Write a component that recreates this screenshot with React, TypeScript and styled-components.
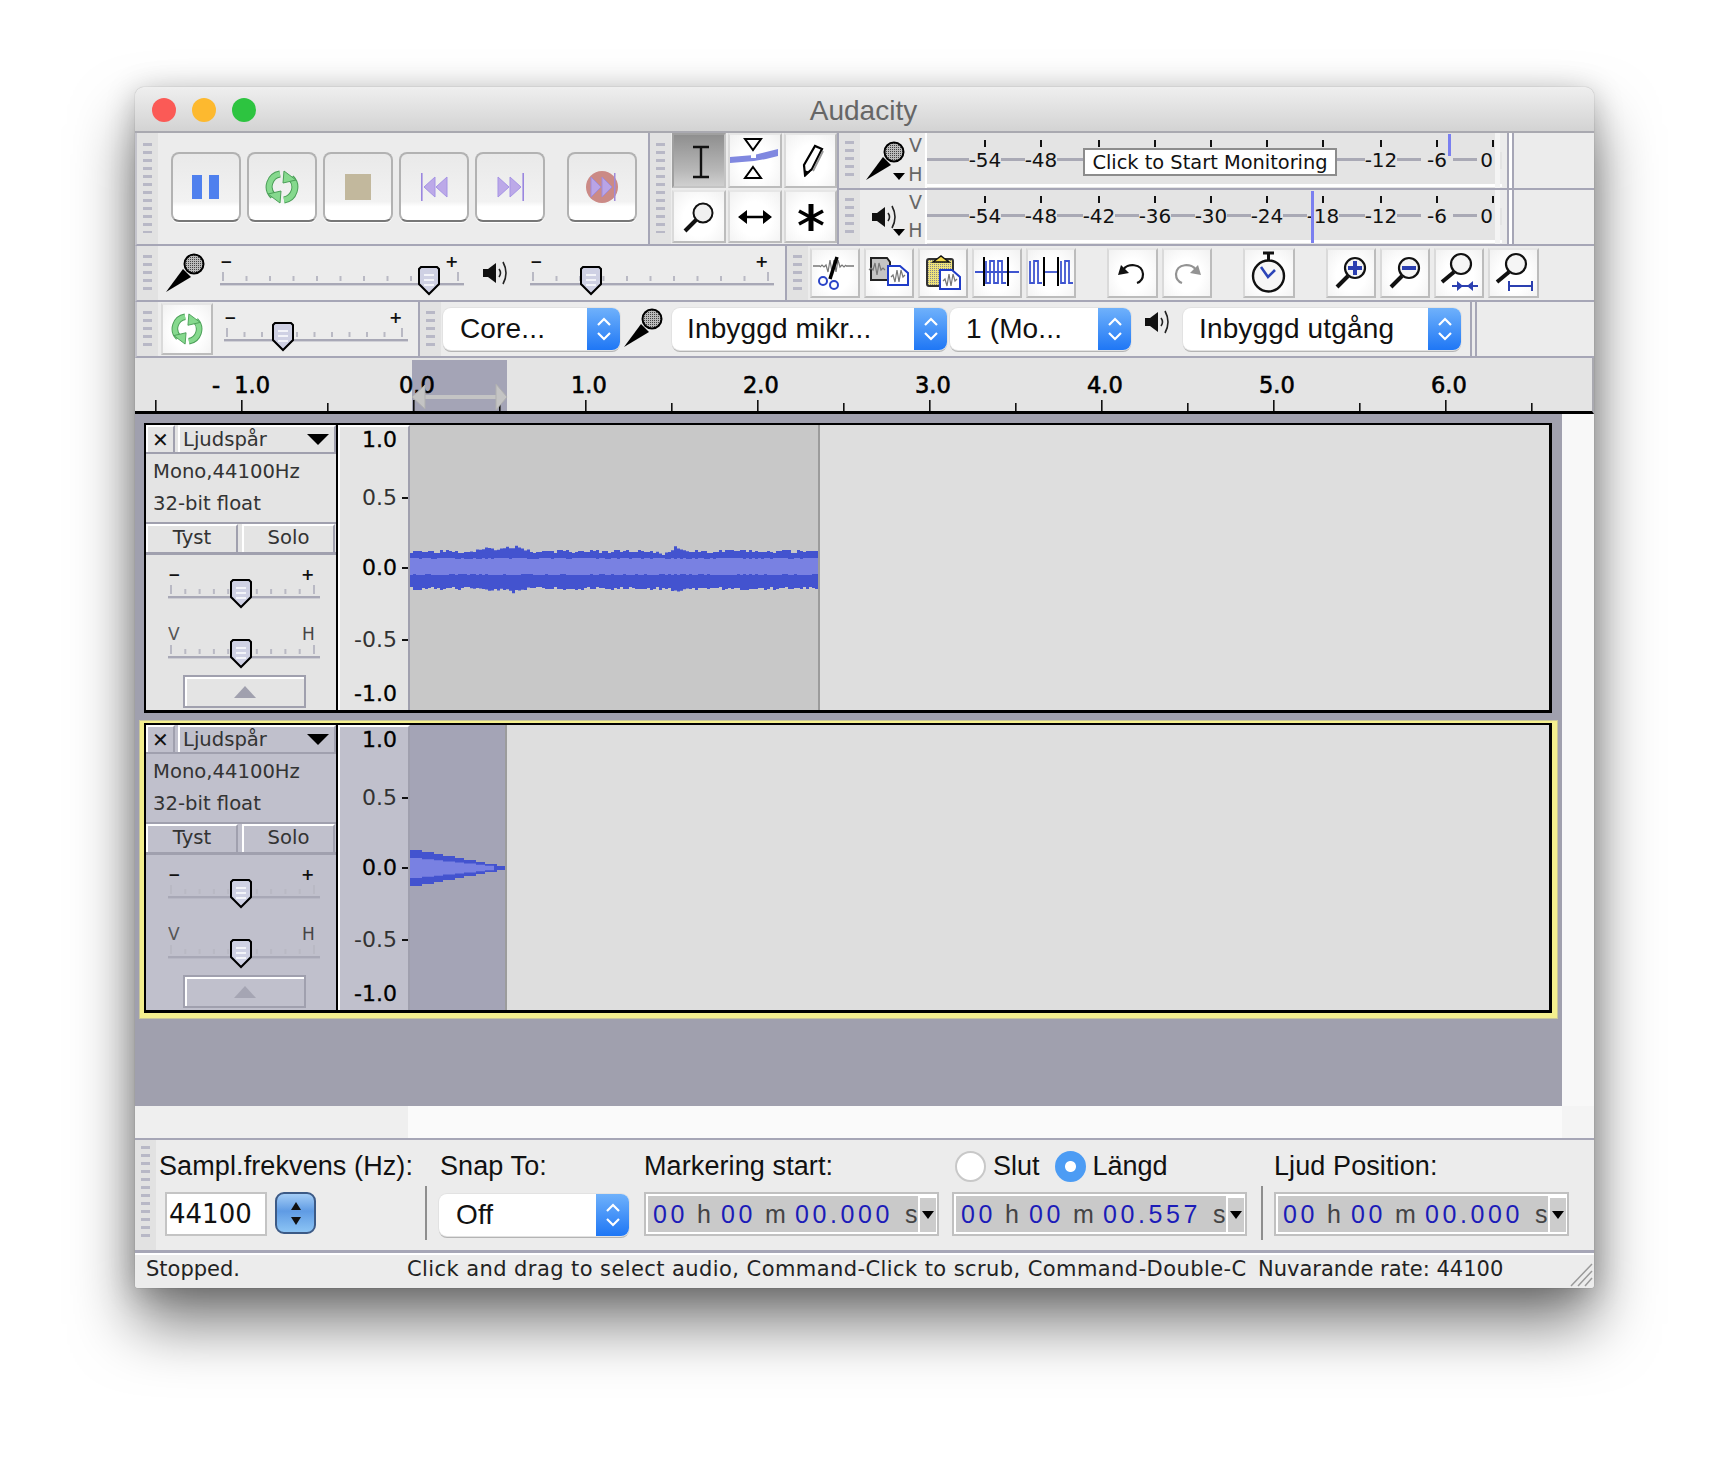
import React from "react";
import styled, { createGlobalStyle } from "styled-components";

const LUCIDA = '"DejaVu Sans", sans-serif';
const HELV = '"Liberation Sans", Arial, sans-serif';
const LINE = "#a6a6b6";

// ---------- icons ----------

const Pause = () => (
  <svg width="28" height="24" viewBox="0 0 28 24">
    <rect x="0" width="10" height="24" fill="#4f80ee" />
    <rect x="17" width="10" height="24" fill="#4f80ee" />
  </svg>
);

const Loop = ({ size = 34 }: { size?: number }) => (
  <svg width={size} height={size} viewBox="0 0 34 34">
    <g fill="none" strokeLinecap="butt">
      <path d="M15 4A13 13 0 0 0 8 26" stroke="#4b9f58" strokeWidth="7" />
      <path d="M19 30A13 13 0 0 0 26 8" stroke="#4b9f58" strokeWidth="7" />
      <path d="M15 4A13 13 0 0 0 8 26" stroke="#86d98e" strokeWidth="5" />
      <path d="M19 30A13 13 0 0 0 26 8" stroke="#86d98e" strokeWidth="5" />
    </g>
    <path d="M3 24L16 21 15 33Z" fill="#86d98e" stroke="#4b9f58" />
    <path d="M31 10L18 13 19 1Z" fill="#86d98e" stroke="#4b9f58" />
  </svg>
);

const Stop = () => <svg width="26" height="26"><rect width="26" height="26" fill="#c2b89d" /></svg>;

const Skip = ({ end }: { end?: boolean }) => (
  <svg width="27" height="28" viewBox="0 0 27 28">
    <g transform={end ? "translate(27 0) scale(-1 1)" : undefined}>
      <rect x="0" y="0" width="1.6" height="28" fill="#9a86df" />
      <path d="M14 4L3 14 14 24ZM26 4L15 14 26 24Z" fill="#bca9e8" stroke="#a593e4" />
    </g>
  </svg>
);

const RecordIcon = () => (
  <svg width="34" height="34" viewBox="0 0 34 34">
    <circle cx="17" cy="17" r="16" fill="#cb8a86" />
    <path d="M6 7L16 17 6 27ZM17 7L27 17 17 27Z" fill="#b9a4e6" stroke="#a08ad8" />
    <rect x="29" y="3" width="1.5" height="28" fill="#a08ad8" />
  </svg>
);

const ToolSvg = ({ children, size = 54 }: { children: React.ReactNode; size?: number }) => (
  <svg width={size} height={size} viewBox={`0 0 ${size} ${size}`}>{children}</svg>
);

const IBeam = () => (
  <ToolSvg>
    <path d="M21 13H37M21 43H37M29 13V43" stroke="#111" strokeWidth="2.4" fill="none" />
  </ToolSvg>
);

const Envelope = () => (
  <ToolSvg>
    <path d="M17 5H33L25 16ZM25 33L33 44H17Z" fill="#fff" stroke="#000" strokeWidth="2" />
    <path d="M2 23L26 21 50 15V22L38 25 26 27 2 29Z" fill="#8088e0" />
    <rect x="23" y="19" width="5" height="5" fill="#fff" />
  </ToolSvg>
);

const Pencil = () => (
  <ToolSvg>
    <path d="M21 41L20 31 31 12 38 15 28 35Z" fill="#fff" stroke="#000" strokeWidth="2.2" />
    <path d="M20 36L21 43 26 38Z" fill="#000" />
    <path d="M29 37L39 17" stroke="#999" strokeWidth="2" />
  </ToolSvg>
);

const Magnifier = () => (
  <ToolSvg>
    <circle cx="31" cy="23" r="9.5" fill="#f0f0f0" stroke="#111" strokeWidth="2" />
    <path d="M24 30L13 41" stroke="#111" strokeWidth="4" />
  </ToolSvg>
);

const TimeShift = () => (
  <ToolSvg>
    <path d="M12 27H42" stroke="#000" strokeWidth="2.4" />
    <path d="M10 27L19 20V34ZM44 27L35 20V34Z" fill="#000" />
  </ToolSvg>
);

const Multi = () => (
  <ToolSvg>
    <path d="M27 14V41" stroke="#000" strokeWidth="5" />
    <path d="M15 21L39 34M39 21L15 34" stroke="#000" strokeWidth="3.6" />
  </ToolSvg>
);

const Mic = ({ size = 40 }: { size?: number }) => (
  <svg width={size} height={size} viewBox="0 0 40 40">
    <defs>
      <pattern id="mesh" width="2" height="2" patternUnits="userSpaceOnUse">
        <rect width="2" height="2" fill="#bbb" />
        <rect width="1" height="1" fill="#444" />
      </pattern>
    </defs>
    <path d="M0 39L17 16 25 24Z" fill="#000" />
    <circle cx="28" cy="11" r="9.5" fill="url(#mesh)" stroke="#000" strokeWidth="2" />
  </svg>
);

const Speaker = () => (
  <svg width="26" height="28" viewBox="0 0 26 28">
    <path d="M0 10H5L13 4V24L5 18H0Z" fill="#111" />
    <path d="M16 10Q19 14 16 18M20 3Q26 14 20 25" stroke="#222" strokeWidth="1.6" fill="none" />
  </svg>
);

const WaveLine = ({ x, y, w, c = "#777" }: { x: number; y: number; w: number; c?: string }) => {
  const pts: string[] = [];
  for (let i = 0; i <= w; i += 2) {
    const a = i > w * 0.25 && i < w * 0.75 ? 6 : 1;
    pts.push(`${x + i},${y + (i % 4 === 0 ? a : -a)}`);
  }
  return <polyline points={pts.join(" ")} fill="none" stroke={c} strokeWidth="1.2" />;
};

const Cut = () => (
  <ToolSvg size={50}>
    <path d="M3 18H10M36 18H44" stroke="#777" strokeWidth="1.5" />
    <WaveLine x={10} y={18} w={26} />
    <path d="M27 9L20 31" stroke="#000" strokeWidth="3.5" />
    <circle cx="13" cy="33" r="4" fill="none" stroke="#2b44c8" strokeWidth="2" />
    <circle cx="24" cy="37" r="4" fill="none" stroke="#2b44c8" strokeWidth="2" />
  </ToolSvg>
);

const BlueDoc = ({ x, y }: { x: number; y: number }) => (
  <g transform={`translate(${x} ${y})`}>
    <path d="M1 1H13L21 8V20H1Z" fill="#fff" stroke="#1f3cc8" strokeWidth="2" />
    <WaveLine x={4} y={11} w={14} />
  </g>
);

const Copy = () => (
  <ToolSvg size={50}>
    <path d="M7 10H23L26 14V32H7Z" fill="#c4c4c4" stroke="#222" strokeWidth="2" />
    <WaveLine x={5} y={21} w={16} />
    <BlueDoc x={23} y={17} />
  </ToolSvg>
);

const Paste = () => (
  <ToolSvg size={50}>
    <defs>
      <pattern id="hatch" width="2" height="2" patternUnits="userSpaceOnUse">
        <rect width="2" height="2" fill="#eee27a" />
        <rect width="1" height="1" fill="#888" />
      </pattern>
    </defs>
    <rect x="9" y="11" width="26" height="27" rx="2" fill="url(#hatch)" stroke="#333" strokeWidth="2" />
    <path d="M15 14L19 11 23 8 27 11 31 14Z" fill="#f2d94e" stroke="#111" strokeWidth="1.5" />
    <BlueDoc x={21} y={21} />
  </ToolSvg>
);

const BlueWave = ({ x, w }: { x: number; w: number }) => {
  let d = `M${x} 13`;
  for (let i = 0; i < w; i += 4) d += `V${i % 8 === 0 ? 35 : 13}h4`;
  return <path d={d} fill="none" stroke="#3f55d0" strokeWidth="1.8" />;
};

const Trim = () => (
  <ToolSvg size={50}>
    <path d="M3 24H47" stroke="#3f55d0" strokeWidth="1.8" />
    <BlueWave x={14} w={20} />
    <path d="M12 9V38M36 9V38" stroke="#000" strokeWidth="2" />
  </ToolSvg>
);

const Silence = () => (
  <ToolSvg size={50}>
    <path d="M18 24H33" stroke="#3f55d0" strokeWidth="1.8" />
    <BlueWave x={4} w={12} />
    <BlueWave x={35} w={12} />
    <path d="M18 9V38M32 9V38" stroke="#000" strokeWidth="2" />
  </ToolSvg>
);

const Undo = ({ redo }: { redo?: boolean }) => (
  <ToolSvg size={50}>
    <g transform={redo ? "translate(50 0) scale(-1 1)" : undefined} opacity={redo ? 0.45 : 1}>
      <path d="M16 22C20 15 35 15 36 26C36 31 33 34 30 35" fill="none" stroke="#111" strokeWidth="2.2" />
      <path d="M11 27L14 17 22 25Z" fill="#111" />
    </g>
  </ToolSvg>
);

const Clock = () => (
  <ToolSvg size={52}>
    <path d="M20 6H31M25.5 6V14" stroke="#111" strokeWidth="3" />
    <circle cx="25.5" cy="29" r="15.5" fill="#f6f6f6" stroke="#111" strokeWidth="2.4" />
    <path d="M18 20L25 30 32 23" fill="none" stroke="#2b44b8" strokeWidth="2.6" />
  </ToolSvg>
);

const ZoomIcon = ({ kind }: { kind: "in" | "out" | "fit" | "sel" }) => {
  const plain = kind === "fit" || kind === "sel";
  const cx = plain ? 27 : 29;
  const cy = plain ? 16 : 20;
  return (
    <ToolSvg size={50}>
      <circle cx={cx} cy={cy} r="10" fill="#f5f5f5" stroke="#111" strokeWidth="2.2" />
      <path d={plain ? "M20 24L8 34" : "M22 28L11 39"} stroke="#111" strokeWidth="4" />
      {kind === "in" && <path d="M22 20H36M29 13V27" stroke="#2b3fb0" strokeWidth="4" />}
      {kind === "out" && <path d="M22 20H36" stroke="#2b3fb0" strokeWidth="4" />}
      {kind === "fit" && (
        <g fill="#2b3fb0">
          <rect x="18" y="37" width="26" height="2" />
          <path d="M29 38L23 33V43ZM33 38L39 33V43Z" />
        </g>
      )}
      {kind === "sel" && (
        <g fill="#2b3fb0">
          <rect x="19" y="37" width="25" height="2" />
          <rect x="19" y="33" width="2" height="10" />
          <rect x="42" y="33" width="2" height="10" />
        </g>
      )}
    </ToolSvg>
  );
};

// slider drawn as one svg, the same shape is used in toolbars and tracks
const Slider = ({ width, thumb, low, high }: { width: number; thumb: number; low?: string; high?: string }) => {
  const ticks = Array.from({ length: 11 }, (_, i) => 3 + (i * (width - 9)) / 10);
  return (
    <svg width={width} height="55" style={{ display: "block", flex: "none" }}>
      {ticks.map((x, i) => (
        <rect key={i} x={x - 1} y={i === 0 || i === 10 ? 26 : 30} width="2" height={i === 0 || i === 10 ? 9 : 5} fill="#b9b9c4" />
      ))}
      <rect x="0" y="37" width={width} height="2.4" fill="#a8a8b6" />
      {low ? (
        <>
          <text x="0" y="21" fontFamily={LUCIDA} fontSize="17" fill="#555">{low}</text>
          <text x={width - 18} y="21" fontFamily={LUCIDA} fontSize="17" fill="#444">{high}</text>
        </>
      ) : (
        <>
          <text x="0" y="21" fontFamily={LUCIDA} fontSize="15" fontWeight="700" fill="#111">−</text>
          <text x={width - 19} y="21" fontFamily={LUCIDA} fontSize="16" fontWeight="700" fill="#111">+</text>
        </>
      )}
      <path
        d={`M${thumb - 8} 21H${thumb + 8}L${thumb + 10} 23V38L${thumb} 48L${thumb - 10} 38V23Z`}
        fill="#cfd1e4"
        stroke="#000"
        strokeWidth="2"
      />
      <path d={`M${thumb - 5} 29H${thumb + 5}M${thumb - 5} 34H${thumb + 5}M${thumb - 5} 39H${thumb + 5}`} stroke="#fff" strokeWidth="1.6" />
    </svg>
  );
};

const METER_LABELS = ["-54", "-48", "-42", "-36", "-30", "-24", "-18", "-12", "-6", "0"];
const METER_X = [58, 114, 172, 228, 284, 340, 396, 454, 510, 566];

const MeterScale = ({ level, shift, full, covered }: { level: number; shift: number; full?: boolean; covered?: boolean }) => (
  <svg width="575" height="55" style={{ display: "block" }}>
    <g transform={`translate(0 ${shift})`}>
      <rect x="0" y="24" width="575" height="3" fill="#a9a9b5" />
      <rect x="0" y="50" width="575" height="3" fill="#fff" />
      {METER_X.map((x, i) => {
        const hidden = covered && i >= 2 && i <= 6;
        return (
          <g key={i}>
            <rect x={x - 1} y="6" width="2" height="7" fill="#111" />
            {!hidden && <rect x={x - 16} y="18" width="32" height="17" fill="#e4e4e4" />}
            {!hidden && (
              <text x={x} y="33" textAnchor={i === 9 ? "end" : "middle"} fontFamily={LUCIDA} fontSize="20" fill="#111">
                {METER_LABELS[i]}
              </text>
            )}
          </g>
        );
      })}
    </g>
    <rect x="568" y="0" width="5" height="55" fill="#f4f4f4" />
    <rect x={level} y="1" width="3" height={full ? 52 : 22} fill="#7a7ff0" />
  </svg>
);

const Ruler = () => (
  <RulerBox>
    <svg width="1459" height="53" style={{ display: "block" }}>
      <rect x="277" y="2" width="95" height="51" fill="#a4a4b6" />
      {[-1, 0, 1, 2, 3, 4, 5, 6].map((n) => {
        const x = 278 + n * 172;
        return (
          <g key={n}>
            <rect x={x} y="42" width="1.6" height="11" fill="#111" />
            <rect x={x + 86} y="45" width="1.6" height="8" fill="#111" />
            <text
              x={n === -1 ? 77 : x - 14}
              y="35"
              fontFamily={LUCIDA}
              fontSize="22.5"
              stroke="#000"
              strokeWidth="0.6"
              fill="#000"
              wordSpacing={n === -1 ? 7 : 0}
            >
              {n === -1 ? "- 1.0" : `${n}.0`}
            </text>
          </g>
        );
      })}
      <rect x="20" y="42" width="1.6" height="11" fill="#111" />
      <path d="M282 39H362" stroke="#c4c4c4" strokeWidth="4" />
      <path d="M277 39L290 27V51ZM372 39L361 26V52Z" fill="#c4c4c4" stroke="#b0b0b0" />
    </svg>
  </RulerBox>
);

// ---------- waveforms ----------

function noise(i: number) {
  const s = Math.sin(i * 12.9898) * 43758.5453;
  return s - Math.floor(s);
}

function steppedBand(width: number, top: (x: number) => number, bottom: (x: number) => number) {
  const upper: string[] = [];
  const lower: string[] = [];
  for (let x = 0; x < width; x += 3) {
    const t = top(x);
    const b = bottom(x);
    upper.push(`${x},${t} ${x + 3},${t}`);
    lower.unshift(`${x + 3},${b} ${x},${b}`);
  }
  return [...upper, ...lower].join(" ");
}

// amplitude bumps read off the reference
const bump = (x: number) => {
  const near = (c: number, w: number, h: number) => (Math.abs(x - c) < w ? h * (1 - Math.abs(x - c) / w) : 0);
  return near(78, 20, 4) + near(103, 16, 5) + near(265, 14, 4) - near(253, 8, 5);
};

const LongWave = () => {
  const w = 408;
  return (
    <svg width={w} height="285" style={{ display: "block" }}>
      <polygon
        points={steppedBand(
          w,
          (x) => 128 - bump(x) - Math.round(noise(x) * 3),
          (x) => 162 + Math.max(0, bump(x)) * 0.7 + Math.round(noise(x + 7) * 3)
        )}
        fill="#4353cf"
      />
      <polygon
        points={steppedBand(w, (x) => 134 - Math.round(noise(x + 3) * 1.4), (x) => 149 + Math.round(noise(x + 9) * 1.4))}
        fill="#7981e2"
      />
    </svg>
  );
};

const FadeWave = () => {
  const w = 95;
  const amp = (x: number) => Math.ceil((((w - x) / w) * 18) / 2) * 2;
  return (
    <svg width={w} height="285" style={{ display: "block" }}>
      <polygon points={steppedBand(w, (x) => 143 - amp(x), (x) => 143 + amp(x))} fill="#4353cf" />
      <polygon points={steppedBand(w - 12, (x) => 143 - amp(x) * 0.55, (x) => 143 + amp(x) * 0.55)} fill="#7981e2" />
    </svg>
  );
};

// ---------- parts ----------

const Track = ({ selected, children }: { selected?: boolean; children: React.ReactNode }) => (
  <TrackOuter $selected={selected}>
    <TrackFrame>
      <Controls $selected={selected}>
        <TitleRow>
          <CloseBtn $selected={selected}>✕</CloseBtn>
          <NameBtn $selected={selected}>
            Ljudspår
            <DownTriangle />
          </NameBtn>
        </TitleRow>
        <Info>
          <div>Mono,44100Hz</div>
          <div>32-bit float</div>
        </Info>
        <MuteRow>
          <MuteBtn $selected={selected} $w={92}>Tyst</MuteBtn>
          <MuteBtn $selected={selected} $w={93}>Solo</MuteBtn>
        </MuteRow>
        <SliderSlot>
          <Slider width={152} thumb={73} />
        </SliderSlot>
        <SliderSlot $top={5}>
          <Slider width={152} thumb={73} low="V" high="H" />
        </SliderSlot>
        <CollapseBtn $selected={selected}>
          <UpTriangle $selected={selected} />
        </CollapseBtn>
      </Controls>
      <VRuler $selected={selected}>
        <VLabel $dark $h={26}>1.0<VTick $hide /></VLabel>
        <VLabel $h={58}>0.5<VTick /></VLabel>
        <VLabel $dark $h={70}>0.0<VTick /></VLabel>
        <VLabel $h={72}>-0.5<VTick /></VLabel>
        <VLabel $dark $h={54}>-1.0<VTick $hide /></VLabel>
      </VRuler>
      <WaveArea>{children}</WaveArea>
    </TrackFrame>
  </TrackOuter>
);

const Select = ({ width, label, pad = 16 }: { width: number; label: string; pad?: number }) => (
  <SelectBox $w={width}>
    <SelectText $pad={pad}>{label}</SelectText>
    <Stepper>
      <svg width="18" height="30" viewBox="0 0 18 30">
        <path d="M3 11L9 5 15 11M3 19L9 25 15 19" fill="none" stroke="#fff" strokeWidth="2.2" />
      </svg>
    </Stepper>
  </SelectBox>
);

const TimeBox = ({ ss }: { ss: string }) => (
  <Time>
    <Digits $w={35}>00</Digits>
    <Unit $w={33}>h</Unit>
    <Digits $w={35}>00</Digits>
    <Unit $w={39}>m</Unit>
    <Digits $w={101}>{ss}</Digits>
    <Unit $w={22}>s</Unit>
    <TimeDrop />
  </Time>
);

export default function App() {
  return (
    <>
      <Global />
      <Page>
        <Win>
          <TitleBar>
            <Lights>
              <Light $c="#fb5a56" />
              <Light $c="#fdb92f" />
              <Light $c="#2dc440" />
            </Lights>
            <Title>Audacity</Title>
          </TitleBar>

          <BarRow $h={113}>
            <Grip $pad="10px 0 11px" />
            <Transport>
              <BigBtn><Pause /></BigBtn>
              <BigBtn><Loop /></BigBtn>
              <BigBtn><Stop /></BigBtn>
              <BigBtn><Skip /></BigBtn>
              <BigBtn><Skip end /></BigBtn>
              <RecordBtn><RecordIcon /></RecordBtn>
            </Transport>
            <Sep />
            <Grip $pad="10px 0 11px" />
            <ToolGrid>
              <ToolBtn $active><IBeam /></ToolBtn>
              <ToolBtn><Envelope /></ToolBtn>
              <ToolBtn><Pencil /></ToolBtn>
              <ToolBtn><Magnifier /></ToolBtn>
              <ToolBtn><TimeShift /></ToolBtn>
              <ToolBtn><Multi /></ToolBtn>
            </ToolGrid>
            <Sep />
            <Meters>
              <MeterRow>
                <Grip $pad="8px 0 8px" />
                <MeterIcon>
                  <Mic size={40} />
                  <VH><span>V</span><Caret /><span>H</span></VH>
                </MeterIcon>
                <MeterBody>
                  <MeterScale level={521} shift={1} covered />
                  <Tooltip>Click to Start Monitoring</Tooltip>
                </MeterBody>
                <MeterEnd />
              </MeterRow>
              <MeterRow $last>
                <Grip $pad="8px 0 8px" />
                <MeterIcon>
                  <SpeakerWrap><Speaker /></SpeakerWrap>
                  <VH><span>V</span><Caret /><span>H</span></VH>
                </MeterIcon>
                <MeterBody>
                  <MeterScale level={384} shift={0} full />
                </MeterBody>
                <MeterEnd />
              </MeterRow>
            </Meters>
          </BarRow>

          <BarRow $h={56}>
            <Grip $pad="9px 0 9px" />
            <IconSlot $w={62} $pad={8}><Mic size={40} /></IconSlot>
            <Slider width={244} thumb={209} />
            <IconSlot $w={66} $pad={19}><Speaker /></IconSlot>
            <Slider width={244} thumb={61} />
            <Spacer $w={11} />
            <Sep />
            <Grip $pad="9px 0 9px" />
            <EditBar>
              <EditGroup>
                <EditBtn><Cut /></EditBtn>
                <EditBtn><Copy /></EditBtn>
                <EditBtn><Paste /></EditBtn>
                <EditBtn><Trim /></EditBtn>
                <EditBtn><Silence /></EditBtn>
              </EditGroup>
              <EditGroup>
                <EditBtn $w={50.5}><Undo /></EditBtn>
                <EditBtn $w={50.5}><Undo redo /></EditBtn>
              </EditGroup>
              <EditGroup>
                <EditBtn $w={52}><Clock /></EditBtn>
              </EditGroup>
              <EditGroup>
                <EditBtn><ZoomIcon kind="in" /></EditBtn>
                <EditBtn><ZoomIcon kind="out" /></EditBtn>
                <EditBtn><ZoomIcon kind="fit" /></EditBtn>
                <EditBtn $w={51}><ZoomIcon kind="sel" /></EditBtn>
              </EditGroup>
            </EditBar>
          </BarRow>

          <BarRow $h={56}>
            <Grip $pad="9px 0 9px" />
            <LoopBtn><Loop size={32} /></LoopBtn>
            <Spacer $w={11} />
            <Slider width={184} thumb={59} />
            <Spacer $w={10} />
            <Sep />
            <Grip $pad="9px 0 9px" />
            <DeviceBar>
              <Select width={177} label="Core..." pad={17} />
              <IconSlot $w={52} $pad={4}><Mic size={40} /></IconSlot>
              <Select width={275} label="Inbyggd mikr..." pad={15} />
              <Spacer $w={3} />
              <Select width={181} label="1 (Mo..." />
              <IconSlot $w={52} $pad={14}><Speaker /></IconSlot>
              <Select width={278} label="Inbyggd utgång" />
            </DeviceBar>
            <EndMarks />
          </BarRow>

          <Ruler />

          <TrackArea>
            <Tracks>
              <Track>
                <Selection><LongWave /></Selection>
              </Track>
              <Track selected>
                <Selection $selected><FadeWave /></Selection>
              </Track>
            </Tracks>
            <VScroll />
          </TrackArea>

          <HScroll>
            <HLeft />
            <HThumb />
            <HRight />
          </HScroll>

          <SelectionBar>
            <Grip $pad="6px 0 10px" />
            <RateCol>
              <Label>Sampl.frekvens (Hz):</Label>
              <RateControls>
                <RateInput>44100</RateInput>
                <Spinner>
                  <SpinUp />
                  <SpinDown />
                </Spinner>
              </RateControls>
            </RateCol>
            <VDivider />
            <SnapCol>
              <Label>Snap To:</Label>
              <SnapSlot>
                <Select width={190} label="Off" pad={17} />
              </SnapSlot>
            </SnapCol>
            <MarkCol>
              <Label>Markering start:</Label>
              <TimeBox ss="00.000" />
            </MarkCol>
            <LenCol>
              <RadioRow>
                <Radio />
                <RadioLabel>Slut</RadioLabel>
                <Radio $on />
                <RadioLabel>Längd</RadioLabel>
              </RadioRow>
              <TimeBox ss="00.557" />
            </LenCol>
            <VDivider />
            <PosCol>
              <Label>Ljud Position:</Label>
              <TimeBox ss="00.000" />
            </PosCol>
          </SelectionBar>

          <Status>
            <StatusCell $w={261} $pad={11}>Stopped.</StatusCell>
            <StatusCell $w={862} $pad={11} $ls={0.42}>Click and drag to select audio, Command-Click to scrub, Command-Double-C</StatusCell>
            <StatusCell $w={320} $pad={0}>Nuvarande rate: 44100</StatusCell>
            <ResizeGrip>
              <svg width="24" height="26" viewBox="0 0 24 26">
                <path d="M2 25L23 3M9 25L23 10M16 25L23 17" stroke="#9a9a9a" strokeWidth="1.5" />
              </svg>
            </ResizeGrip>
          </Status>
        </Win>
      </Page>
    </>
  );
}

// ---------- styled components ----------

const Global = createGlobalStyle`
  html, body { margin: 0; padding: 0; background: #fff; }
  * { box-sizing: border-box; }
`;

const Page = styled.div`
  width: 1730px;
  height: 1472px;
  padding: 87px 0 0 135px;
  overflow: hidden;
`;

const Win = styled.div`
  width: 1459px;
  height: 1201px;
  display: flex;
  flex-direction: column;
  background: #ececec;
  border-radius: 9px 9px 3px 3px;
  box-shadow: 0 0 1px rgba(0, 0, 0, 0.45), 0 36px 62px rgba(0, 0, 0, 0.52), 0 4px 30px rgba(0, 0, 0, 0.22);
  overflow: hidden;
`;

const TitleBar = styled.div`
  height: 46px;
  flex: none;
  position: relative;
  display: flex;
  align-items: center;
  justify-content: center;
  padding-top: 4px;
  background: linear-gradient(#efefef, #d3d3d3);
  border-bottom: 2px solid #a9a9b0;
`;

const Lights = styled.div`
  position: absolute;
  left: 17px;
  top: 11px;
  display: flex;
  gap: 16px;
`;

const Light = styled.span<{ $c: string }>`
  width: 24px;
  height: 24px;
  border-radius: 50%;
  background: ${(p) => p.$c};
`;

const Title = styled.div`
  font: 28px ${HELV};
  color: #666;
  margin-left: -2px;
`;

const BarRow = styled.div<{ $h: number }>`
  height: ${(p) => p.$h}px;
  flex: none;
  display: flex;
  background: #ececec;
  border-bottom: 2px solid ${LINE};
  border-left: 2px solid #c4c4cc;
`;

const Grip = styled.div<{ $pad: string }>`
  width: 21px;
  flex: none;
  padding: ${(p) => p.$pad};
  background: #e2e2e2;
  display: flex;

  &::before {
    content: "";
    display: block;
    width: 9px;
    margin-left: 6px;
    background: repeating-linear-gradient(to bottom, #b8b8c6 0 3px, transparent 3px 8px);
  }
`;

const Sep = styled.div`
  width: 2px;
  flex: none;
  background: ${LINE};
`;

const Spacer = styled.div<{ $w: number }>`
  width: ${(p) => p.$w}px;
  flex: none;
`;

const Transport = styled.div`
  width: 490px;
  flex: none;
  padding: 19px 0 0 13px;
  display: flex;
  gap: 6px;
  align-items: flex-start;
`;

const BigBtn = styled.div`
  width: 70px;
  height: 70px;
  flex: none;
  display: flex;
  align-items: center;
  justify-content: center;
  border: 2px solid #b2b2b2;
  border-bottom-color: #777;
  border-radius: 8px;
  background: linear-gradient(#e9e9e9, #f2f2f2 72%, #fff 80%, #fff);
  box-shadow: 0 1px 0 #fff;
`;

const RecordBtn = styled(BigBtn)`
  margin-left: 16px;
`;

const ToolGrid = styled.div`
  width: 165px;
  margin-left: 1px;
  flex: none;
  display: grid;
  grid-template-columns: 54px 54px 53px;
  grid-template-rows: 55px 53px;
  column-gap: 2px;
  row-gap: 2px;
`;

const pressable = `
  display: flex;
  align-items: center;
  justify-content: center;
  border: 2px solid #bcbcbc;
  border-top-color: #e6e6e6;
  border-left-color: #dadada;
  background: radial-gradient(ellipse at 50% 55%, #fff 45%, #f1f1f1 100%);
`;

const ToolBtn = styled.div<{ $active?: boolean }>`
  ${pressable}
  ${(p) => p.$active && "background: linear-gradient(#8f8f8f, #b8b8b8 70%, #d0d0d0); border-color: #a0a0a0 #c4c4c4 #c4c4c4 #a0a0a0;"}
  overflow: hidden;

  svg {
    flex: none;
  }
`;

const Meters = styled.div`
  flex: 1;
  display: flex;
  flex-direction: column;
`;

const MeterRow = styled.div<{ $last?: boolean }>`
  height: ${(p) => (p.$last ? 54 : 57)}px;
  display: flex;
  overflow: hidden;
  ${(p) => !p.$last && `border-bottom: 2px solid ${LINE};`}
`;

const MeterIcon = styled.div`
  width: 65px;
  flex: none;
  display: flex;
  align-items: center;
  justify-content: flex-end;
  background: #ececec;
`;

const SpeakerWrap = styled.div`
  margin-right: 8px;
  display: flex;
`;

const VH = styled.div`
  width: 19px;
  height: 100%;
  position: relative;
  display: flex;
  flex-direction: column;
  justify-content: space-between;
  align-items: center;
  padding: 1px 0 2px;
  font: 19px ${LUCIDA};
  color: #666;
  line-height: 23px;
`;

const Caret = styled.i`
  position: absolute;
  left: -13px;
  bottom: 8px;
  border: 6px solid transparent;
  border-top: 7px solid #000;
  border-bottom: 0;
`;

const MeterBody = styled.div`
  position: relative;
  width: 575px;
  flex: none;
  background: #e4e4e4;
  border-left: 2px solid #fff;
`;

const Tooltip = styled.div`
  position: absolute;
  left: 156px;
  top: 15px;
  width: 254px;
  height: 28px;
  display: flex;
  align-items: center;
  justify-content: center;
  background: #fff;
  border: 2px solid #8c8c8c;
  font: 19.4px ${LUCIDA};
  color: #111;
  white-space: nowrap;
`;

const MeterEnd = styled.div`
  flex: 1;
  margin-left: 7px;
  background: linear-gradient(to right, ${LINE} 0 2px, #fff 2px 5px, ${LINE} 5px 7px, transparent 7px);
`;

const IconSlot = styled.div<{ $w: number; $pad: number }>`
  width: ${(p) => p.$w}px;
  flex: none;
  display: flex;
  align-items: center;
  padding-left: ${(p) => p.$pad}px;
`;

const EditBar = styled.div`
  flex: 1;
  padding-top: 2px;
  padding-left: 2px;
  display: flex;
  align-items: flex-start;
  gap: 31px;
`;

const EditGroup = styled.div`
  display: flex;
  gap: 4px;
`;

const EditBtn = styled.div<{ $w?: number }>`
  ${pressable}
  width: ${(p) => p.$w || 50}px;
  height: 50px;
  overflow: hidden;

  svg {
    flex: none;
  }
`;

const LoopBtn = styled.div`
  ${pressable}
  width: 52px;
  height: 52px;
  margin: 1px 0 0 3px;
  flex: none;
`;

const DeviceBar = styled.div`
  width: 1026px;
  flex: none;
  display: flex;
  align-items: flex-start;
  padding: 6px 0 0 2px;
`;

const EndMarks = styled.div`
  width: 7px;
  margin-left: 3px;
  border-left: 2px solid ${LINE};
  border-right: 2px solid ${LINE};
`;

const SelectBox = styled.div<{ $w: number }>`
  width: ${(p) => p.$w}px;
  height: 42px;
  flex: none;
  display: flex;
  background: #fff;
  border-radius: 8px;
  box-shadow: 0 0 0 1px #e2e2e2, 0 2px 0 #b4b4b4;
  overflow: hidden;
`;

const SelectText = styled.div<{ $pad: number }>`
  flex: 1;
  padding-left: ${(p) => p.$pad}px;
  font: 28px/41px ${HELV};
  letter-spacing: 0.15px;
  color: #111;
  white-space: nowrap;
`;

const Stepper = styled.div`
  width: 33px;
  flex: none;
  display: flex;
  align-items: center;
  justify-content: center;
  background: linear-gradient(#6fb1fb, #1f77f5);
`;

const RulerBox = styled.div`
  height: 56px;
  flex: none;
  background: #e4e4e4;
  border-bottom: 3px solid #000;
  border-right: 2px solid #a9a9b0;
  overflow: hidden;
`;

const TrackArea = styled.div`
  height: 692px;
  flex: none;
  display: flex;
  background: #a0a0ae;
`;

const Tracks = styled.div`
  flex: 1;
  padding: 6px 0 0 4px;
  display: flex;
  flex-direction: column;
  gap: 1px;
`;

const VScroll = styled.div`
  width: 32px;
  flex: none;
  background: #f8f8f8;
`;

const TrackOuter = styled.div<{ $selected?: boolean }>`
  width: 1419px;
  height: 299px;
  padding: 3px 6px 6px 5px;
  ${(p) => p.$selected && "background: #f4ef8e; box-shadow: inset 0 0 0 1px #c9c79a;"}
`;

const TrackFrame = styled.div`
  height: 290px;
  display: flex;
  background: #dedede;
  border: solid #000;
  border-width: 2px 3px 3px 2px;
`;

const Controls = styled.div<{ $selected?: boolean }>`
  width: 192px;
  flex: none;
  display: flex;
  flex-direction: column;
  background: ${(p) => (p.$selected ? "#c0c0cc" : "#e4e4e4")};
  border-right: 2px solid #000;
  font: 19.6px ${LUCIDA};
  color: #333;
`;

const TitleRow = styled.div`
  height: 29px;
  flex: none;
  display: flex;
  gap: 3px;
  border-bottom: 2px solid #a0a0ae;
`;

const raised = (selected?: boolean) => `
  border-top: 2px solid #fff;
  border-left: 2px solid #fff;
  border-right: 2px solid #a0a0ae;
  background: ${selected ? "#c0c0cc" : "#e4e4e4"};
`;

const CloseBtn = styled.div<{ $selected?: boolean }>`
  ${(p) => raised(p.$selected)}
  width: 29px;
  flex: none;
  display: flex;
  align-items: center;
  justify-content: center;
  font: 700 20px ${LUCIDA};
  color: #111;
`;

const NameBtn = styled.div<{ $selected?: boolean }>`
  ${(p) => raised(p.$selected)}
  flex: 1;
  display: flex;
  align-items: center;
  justify-content: space-between;
  padding: 0 5px 0 3px;
  line-height: 24px;
`;

const DownTriangle = styled.i`
  border: 11px solid transparent;
  border-top: 11px solid #000;
  border-bottom: 0;
`;

const Info = styled.div`
  height: 68px;
  flex: none;
  padding: 2px 0 0 7px;
  line-height: 32px;
  white-space: nowrap;
`;

const MuteRow = styled.div`
  height: 33px;
  flex: none;
  display: flex;
  gap: 4px;
  border-top: 2px solid #a0a0ae;
  border-bottom: 3px solid #a0a0ae;
`;

const MuteBtn = styled.div<{ $selected?: boolean; $w: number }>`
  ${(p) => raised(p.$selected)}
  width: ${(p) => p.$w}px;
  text-align: center;
  line-height: 24px;
`;

const SliderSlot = styled.div<{ $top?: number }>`
  padding: ${(p) => p.$top || 4}px 0 0 22px;
  flex: none;
`;

const CollapseBtn = styled.div<{ $selected?: boolean }>`
  width: 123px;
  height: 33px;
  margin: 1px 0 0 37px;
  flex: none;
  display: flex;
  align-items: center;
  justify-content: center;
  border: 2px solid #a0a0ae;
  background: ${(p) => (p.$selected ? "#c0c0cc" : "#e4e4e4")};
  box-shadow: inset 2px 2px 0 #fff;
`;

const UpTriangle = styled.i<{ $selected?: boolean }>`
  border: 11px solid transparent;
  border-bottom: 12px solid #a0a0ae;
  border-top: 0;
  opacity: ${(p) => (p.$selected ? 0.85 : 1)};
`;

const VRuler = styled.div<{ $selected?: boolean }>`
  width: 72px;
  flex: none;
  background: ${(p) => (p.$selected ? "#c0c0cc" : "#e4e4e4")};
  border-left: 2px solid #fff;
  border-top: 2px solid #fff;
  border-right: 2px solid #a0a0ae;
  display: flex;
  flex-direction: column;
  font: 22px ${LUCIDA};
`;

const VLabel = styled.div<{ $dark?: boolean; $h: number }>`
  height: ${(p) => p.$h}px;
  flex: none;
  display: flex;
  align-items: flex-end;
  justify-content: flex-end;
  line-height: 27px;
  color: ${(p) => (p.$dark ? "#000" : "#333")};
  ${(p) => p.$dark && "-webkit-text-stroke: 0.3px #000;"}
  white-space: nowrap;
`;

const VTick = styled.i<{ $hide?: boolean }>`
  width: 6px;
  height: 2px;
  margin: 0 0 12px 5px;
  background: ${(p) => (p.$hide ? "transparent" : "#111")};
`;

const WaveArea = styled.div`
  flex: 1;
  background: #dedede;
`;

const Selection = styled.div<{ $selected?: boolean }>`
  width: ${(p) => (p.$selected ? 97 : 410)}px;
  height: 100%;
  background: ${(p) => (p.$selected ? "#a4a4b6" : "#c8c8c8")};
  border-right: 2px solid #9c9c9c;
`;

const HScroll = styled.div`
  height: 32px;
  flex: none;
  display: flex;
  background: #f2f2f2;
`;

const HLeft = styled.div`
  width: 273px;
  background: #efefef;
`;

const HThumb = styled.div`
  flex: 1;
  background: #fafafa;
`;

const HRight = styled.div`
  width: 32px;
  background: #f4f4f4;
`;

const SelectionBar = styled.div`
  height: 115px;
  flex: none;
  display: flex;
  border-top: 2px solid ${LINE};
  border-bottom: 3px solid ${LINE};
  background: #ececec;
`;

const Col = styled.div`
  display: flex;
  flex-direction: column;
  flex: none;
`;

const Label = styled.div`
  height: 52px;
  font: 27px/52px ${HELV};
  letter-spacing: 0.1px;
  color: #111;
  white-space: nowrap;
`;

const RateCol = styled(Col)`
  width: 269px;
  padding-left: 3px;
`;

const RateControls = styled.div`
  display: flex;
  gap: 8px;
  padding-left: 6px;
`;

const RateInput = styled.div`
  width: 102px;
  height: 44px;
  background: #fff;
  border: 2px solid #c4c4c4;
  padding-left: 2px;
  font: 26px/40px ${LUCIDA};
  color: #111;
`;

const Spinner = styled.div`
  width: 41px;
  height: 42px;
  display: flex;
  flex-direction: column;
  align-items: center;
  justify-content: center;
  gap: 7px;
  border: 2px solid #3c5a86;
  border-radius: 9px;
  background: linear-gradient(#a4cdf6, #5f9be4 45%, #8cc4f4 100%);
`;

const SpinUp = styled.i`
  border: 5px solid transparent;
  border-bottom: 8px solid #111;
  border-top: 0;
`;

const SpinDown = styled.i`
  border: 5px solid transparent;
  border-top: 8px solid #111;
  border-bottom: 0;
`;

const VDivider = styled.div`
  width: 2px;
  height: 54px;
  margin-top: 46px;
  flex: none;
  background: #8e8e8e;
`;

const SnapCol = styled(Col)`
  width: 217px;
  padding-left: 13px;
`;

const SnapSlot = styled.div`
  padding-top: 2px;
  margin-left: -1px;
`;

const MarkCol = styled(Col)`
  width: 308px;
`;

const LenCol = styled(Col)`
  width: 309px;
`;

const PosCol = styled(Col)`
  flex: 1;
  padding-left: 11px;
`;

const RadioRow = styled.div`
  height: 52px;
  display: flex;
  align-items: center;
  padding-left: 3px;
`;

const Radio = styled.i<{ $on?: boolean }>`
  width: 31px;
  height: 31px;
  flex: none;
  border-radius: 50%;
  background: ${(p) => (p.$on ? "radial-gradient(circle, #fff 0 5px, #4c9cf4 6px)" : "#fff")};
  border: 2px solid ${(p) => (p.$on ? "#4c9cf4" : "#c8c8c8")};
`;

const RadioLabel = styled.span`
  font: 27px ${HELV};
  color: #111;
  margin: 0 15px 0 7px;
`;

const Time = styled.div`
  width: 295px;
  height: 44px;
  flex: none;
  display: flex;
  align-items: stretch;
  padding-left: 7px;
  background: #c9c9c9;
  border: 2px solid #c0c0c0;
  box-shadow: inset 0 0 0 2px #fff;
  font: 25px/40px ${HELV};
`;

const Digits = styled.span<{ $w: number }>`
  width: ${(p) => p.$w}px;
  flex: none;
  color: #1c1cb8;
  letter-spacing: 3.6px;
  white-space: nowrap;
`;

const Unit = styled.span<{ $w: number }>`
  width: ${(p) => p.$w}px;
  flex: none;
  padding-left: 9px;
  color: #444;
`;

const TimeDrop = styled.i`
  width: 18px;
  margin: 2px 0 2px 0;
  flex: none;
  display: flex;
  align-items: center;
  justify-content: center;
  background: #ccc;
  border-left: 2px solid #fff;
  border-top: 2px solid #fff;

  &::after {
    content: "";
    border: 6px solid transparent;
    border-top: 8px solid #000;
    border-bottom: 0;
  }
`;

const Status = styled.div`
  flex: 1;
  display: flex;
  position: relative;
  border-top: 2px solid #fff;
  background: #ececec;
  font: 21px/28px ${LUCIDA};
  color: #222;
  white-space: nowrap;
`;

const StatusCell = styled.div<{ $w: number; $pad: number; $ls?: number }>`
  width: ${(p) => p.$w}px;
  flex: none;
  padding-left: ${(p) => p.$pad}px;
  letter-spacing: ${(p) => p.$ls || 0}px;
  overflow: hidden;
`;

const ResizeGrip = styled.div`
  position: absolute;
  right: 1px;
  bottom: 1px;
  display: flex;
`;
